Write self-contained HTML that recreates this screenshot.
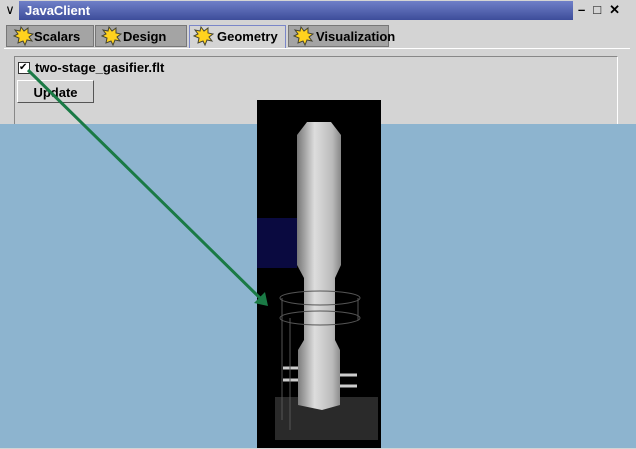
<html><body style="margin:0;width:636px;height:448px;overflow:hidden;position:relative;background:#d4d4d4;font-family:'Liberation Sans',sans-serif">
<div style="position:absolute;left:0;top:0;width:636px;height:21px;background:#d4d4d4"></div>
<div style="position:absolute;left:2px;top:2px;width:16px;height:17px;font-size:13px;text-align:center">&#8744;</div>
<div style="position:absolute;left:19px;top:1px;width:554px;height:19px;background:linear-gradient(#6f7fc8,#3d4d9a);color:#fff;font-size:13px;font-weight:bold;line-height:19px;padding-left:6px;box-sizing:border-box">JavaClient</div>
<div style="position:absolute;left:578px;top:2px;width:56px;height:17px;font-size:13px;font-weight:bold;letter-spacing:8px">–□✕</div>
<div style="position:absolute;left:4px;top:48px;width:626px;height:400px;border-top:1px solid #fff;background:#d4d4d4"></div>
<div style="position:absolute;left:6px;top:25px;width:88px;height:22px;background:#a4a4a4;border:1px solid #777;font-size:13px;font-weight:bold;line-height:22px;padding-left:27px;box-sizing:border-box">Scalars</div>
<div style="position:absolute;left:95px;top:25px;width:92px;height:22px;background:#a4a4a4;border:1px solid #777;font-size:13px;font-weight:bold;line-height:22px;padding-left:27px;box-sizing:border-box">Design</div>
<div style="position:absolute;left:189px;top:25px;width:97px;height:23px;background:#d4d4d4;border:1px solid #7a86c8;border-bottom:none;font-size:13px;font-weight:bold;line-height:22px;padding-left:27px;box-sizing:border-box">Geometry</div>
<div style="position:absolute;left:288px;top:25px;width:101px;height:22px;background:#a4a4a4;border:1px solid #777;font-size:13px;font-weight:bold;line-height:22px;padding-left:27px;box-sizing:border-box">Visualization</div>
<svg style="position:absolute;left:0;top:0" width="636" height="60"><defs><polygon id="s" points="25,27 28,31 32,28 32,33 37,34 33,37 36,41 31,40 29,45 27,41 22,43 23,38 18,36 22,34 19,30 24,31"/></defs><g fill="#ffd21e" stroke="#443" stroke-width="1">
<use href="#s" x="-4"/><use href="#s" x="84"/><use href="#s" x="176"/><use href="#s" x="276"/></g></svg>
<div style="position:absolute;left:14px;top:56px;width:602px;height:80px;border:1px solid #888;border-right-color:#fff"></div>
<div style="position:absolute;left:18px;top:62px;width:10px;height:10px;border:1px solid #333;background:#fff;font-size:10px;line-height:10px">✔</div>
<div style="position:absolute;left:35px;top:60px;font-size:13px;font-weight:bold">two-stage_gasifier.flt</div>
<div style="position:absolute;left:17px;top:80px;width:77px;height:23px;border:1px solid #555;border-top-color:#fff;border-left-color:#fff;font-size:13px;font-weight:bold;line-height:23px;text-align:center;box-sizing:border-box">Update</div>
<div style="position:absolute;left:0;top:124px;width:636px;height:324px;background:#8db4cf"></div>
<svg style="position:absolute;left:0;top:0" width="636" height="448">
<rect x="257" y="100" width="124" height="348" fill="#000"/>
<rect x="257" y="218" width="40" height="50" fill="#0a0a40"/>
<defs><linearGradient id="g" x1="0" x2="1"><stop offset="0" stop-color="#777"/><stop offset=".4" stop-color="#ddd"/><stop offset=".8" stop-color="#bbb"/><stop offset="1" stop-color="#888"/></linearGradient></defs>
<rect x="275" y="397" width="103" height="43" fill="#2a2a2a"/>
<polygon points="307,122 331,122 341,135 341,265 335,278 335,340 340,350 340,405 322,410 298,405 298,350 304,340 304,278 297,265 297,135" fill="url(#g)"/>
<g stroke="#ccc" stroke-width="3"><line x1="283" y1="368" x2="298" y2="368"/><line x1="283" y1="380" x2="298" y2="380"/><line x1="340" y1="375" x2="357" y2="375"/><line x1="340" y1="386" x2="357" y2="386"/></g>
<g stroke="#555" fill="none"><ellipse cx="320" cy="298" rx="40" ry="7"/><ellipse cx="320" cy="318" rx="40" ry="7"/><line x1="282" y1="298" x2="282" y2="420"/><line x1="290" y1="318" x2="290" y2="430"/><line x1="358" y1="298" x2="358" y2="320"/></g>
<line x1="28" y1="70" x2="262" y2="300" stroke="#1a7a45" stroke-width="3"/>
<polygon points="268,306 254,303 265,292" fill="#1a7a45"/>
</svg>
</body></html>
